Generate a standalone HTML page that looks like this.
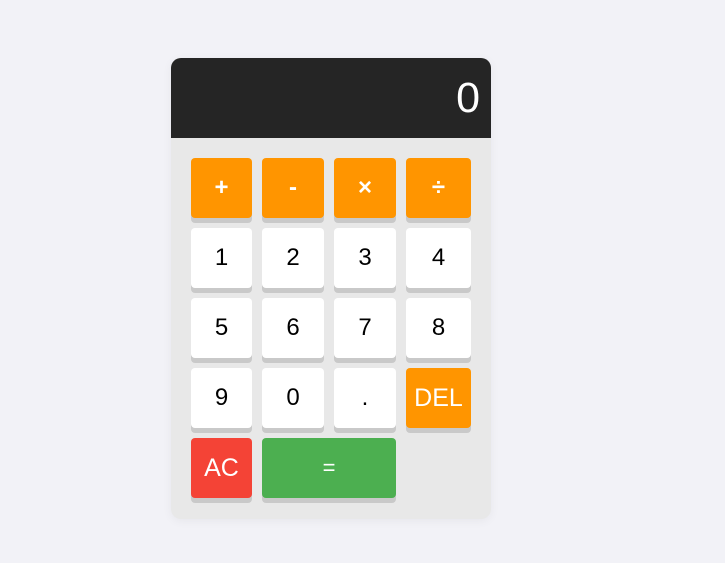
<!DOCTYPE html>
<html><head><meta charset="utf-8"><style>
*{margin:0;padding:0;box-sizing:border-box}
body{width:725px;height:563px;background:#f2f2f7;font-family:"Liberation Sans",Arial,sans-serif;position:relative;overflow:hidden}
.calc{position:absolute;left:171px;top:58px;width:320px;height:461px;background:#e8e8e8;border-radius:10px;box-shadow:0 2px 10px rgba(0,0,0,0.05)}
.disp{position:absolute;left:0;top:0;width:320px;height:80px;background:#252525;border-radius:10px 10px 0 0;color:#fff;font-size:43px;text-align:right;padding-right:11px;line-height:80px}
.b{position:absolute;height:60px;border-radius:4px;box-shadow:0 5px 0 #c9c9c9;display:flex;align-items:center;justify-content:center;font-size:24px;color:#000;background:#fff}
.o{background:#ff9500;color:#fff;font-size:24px;font-weight:bold}
.del{background:#ff9500;color:#fff;font-size:25px}
.ac{background:#f44336;color:#fff;font-size:25px}
.eq{background:#4caf50;color:#fff;font-size:22px}
</style></head><body>
<div class="calc"><div class="disp">0</div></div>
<div class="b o" style="left:191px;top:158px;width:61px">+</div>
<div class="b o" style="left:262px;top:158px;width:62px">-</div>
<div class="b o" style="left:334px;top:158px;width:62px">×</div>
<div class="b o" style="left:406px;top:158px;width:65px">÷</div>
<div class="b" style="left:191px;top:228px;width:61px">1</div>
<div class="b" style="left:262px;top:228px;width:62px">2</div>
<div class="b" style="left:334px;top:228px;width:62px">3</div>
<div class="b" style="left:406px;top:228px;width:65px">4</div>
<div class="b" style="left:191px;top:298px;width:61px">5</div>
<div class="b" style="left:262px;top:298px;width:62px">6</div>
<div class="b" style="left:334px;top:298px;width:62px">7</div>
<div class="b" style="left:406px;top:298px;width:65px">8</div>
<div class="b" style="left:191px;top:368px;width:61px">9</div>
<div class="b" style="left:262px;top:368px;width:62px">0</div>
<div class="b" style="left:334px;top:368px;width:62px">.</div>
<div class="b del" style="left:406px;top:368px;width:65px">DEL</div>
<div class="b ac" style="left:191px;top:438px;width:61px">AC</div>
<div class="b eq" style="left:262px;top:438px;width:134px">=</div>
</body></html>
